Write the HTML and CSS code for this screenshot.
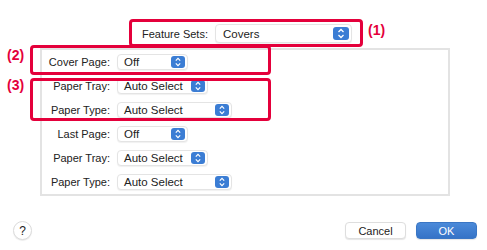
FILE: index.html
```html
<!DOCTYPE html>
<html lang="en">
    <head>
        <meta charset="UTF-8" />
        <title>Covers</title>
        <link rel="stylesheet" href="styles.css">
    </head>
    <body>
        <div class="sheet">
            <div class="feature-row">
                <span class="feature-label">Feature Sets:</span>
                <div class="popup popup-feature">
                    <span>Covers</span>
                    <svg class="stepper" width="16" height="13" viewBox="0 0 16 13">
                        <rect width="16" height="13" rx="3" fill="#3b7dd4"/>
                        <polyline points="5.5,5 8,2.5 10.5,5" fill="none" stroke="#fff" stroke-width="1.3"/>
                        <polyline points="5.5,8 8,10.5 10.5,8" fill="none" stroke="#fff" stroke-width="1.3"/>
                    </svg>
                </div>
            </div>

            <div class="panel">
                <div class="row">
                    <span class="label">Cover Page:</span>
                    <div class="popup w-off">
                        <span>Off</span>
                        <svg class="stepper" width="14" height="12" viewBox="0 0 14 12">
                            <rect width="14" height="12" rx="3" fill="#3b7dd4"/>
                            <polyline points="4.8,4.6 7,2.4 9.2,4.6" fill="none" stroke="#fff" stroke-width="1.2"/>
                            <polyline points="4.8,7.4 7,9.6 9.2,7.4" fill="none" stroke="#fff" stroke-width="1.2"/>
                        </svg>
                    </div>
                </div>
                <div class="row">
                    <span class="label">Paper Tray:</span>
                    <div class="popup w-tray">
                        <span>Auto Select</span>
                        <svg class="stepper" width="14" height="12" viewBox="0 0 14 12">
                            <rect width="14" height="12" rx="3" fill="#3b7dd4"/>
                            <polyline points="4.8,4.6 7,2.4 9.2,4.6" fill="none" stroke="#fff" stroke-width="1.2"/>
                            <polyline points="4.8,7.4 7,9.6 9.2,7.4" fill="none" stroke="#fff" stroke-width="1.2"/>
                        </svg>
                    </div>
                </div>
                <div class="row">
                    <span class="label">Paper Type:</span>
                    <div class="popup w-type">
                        <span>Auto Select</span>
                        <svg class="stepper" width="14" height="12" viewBox="0 0 14 12">
                            <rect width="14" height="12" rx="3" fill="#3b7dd4"/>
                            <polyline points="4.8,4.6 7,2.4 9.2,4.6" fill="none" stroke="#fff" stroke-width="1.2"/>
                            <polyline points="4.8,7.4 7,9.6 9.2,7.4" fill="none" stroke="#fff" stroke-width="1.2"/>
                        </svg>
                    </div>
                </div>
                <div class="row">
                    <span class="label">Last Page:</span>
                    <div class="popup w-off">
                        <span>Off</span>
                        <svg class="stepper" width="14" height="12" viewBox="0 0 14 12">
                            <rect width="14" height="12" rx="3" fill="#3b7dd4"/>
                            <polyline points="4.8,4.6 7,2.4 9.2,4.6" fill="none" stroke="#fff" stroke-width="1.2"/>
                            <polyline points="4.8,7.4 7,9.6 9.2,7.4" fill="none" stroke="#fff" stroke-width="1.2"/>
                        </svg>
                    </div>
                </div>
                <div class="row">
                    <span class="label">Paper Tray:</span>
                    <div class="popup w-tray">
                        <span>Auto Select</span>
                        <svg class="stepper" width="14" height="12" viewBox="0 0 14 12">
                            <rect width="14" height="12" rx="3" fill="#3b7dd4"/>
                            <polyline points="4.8,4.6 7,2.4 9.2,4.6" fill="none" stroke="#fff" stroke-width="1.2"/>
                            <polyline points="4.8,7.4 7,9.6 9.2,7.4" fill="none" stroke="#fff" stroke-width="1.2"/>
                        </svg>
                    </div>
                </div>
                <div class="row">
                    <span class="label">Paper Type:</span>
                    <div class="popup w-type">
                        <span>Auto Select</span>
                        <svg class="stepper" width="14" height="12" viewBox="0 0 14 12">
                            <rect width="14" height="12" rx="3" fill="#3b7dd4"/>
                            <polyline points="4.8,4.6 7,2.4 9.2,4.6" fill="none" stroke="#fff" stroke-width="1.2"/>
                            <polyline points="4.8,7.4 7,9.6 9.2,7.4" fill="none" stroke="#fff" stroke-width="1.2"/>
                        </svg>
                    </div>
                </div>
            </div>

            <div class="footer">
                <button class="help">?</button>
                <div class="actions">
                    <button class="btn">Cancel</button>
                    <button class="btn btn-ok">OK</button>
                </div>
            </div>

            <!-- annotation marks -->
            <div class="mark mark-1"></div>
            <div class="mark mark-2"></div>
            <div class="mark mark-3"></div>
            <span class="tag tag-1">(1)</span>
            <span class="tag tag-2">(2)</span>
            <span class="tag tag-3">(3)</span>
        </div>
    </body>
</html>
```

FILE: styles.css
```css
* {
    margin: 0;
    padding: 0;
    box-sizing: border-box;
}

body {
    background: #fff;
    font-family: 'Liberation Sans', Arial, sans-serif;
    font-size: 11px;
    color: #222;
}

.sheet {
    position: relative;
    width: 487px;
    height: 250px;
    padding-top: 24px;
}

.feature-row {
    display: flex;
    align-items: center;
    height: 19px;
    padding-left: 140px;
    gap: 7px;
}

.feature-label {
    width: 68px;
    text-align: right;
}

.popup {
    display: flex;
    align-items: center;
    justify-content: space-between;
    height: 16px;
    padding: 0 2px 0 6px;
    background: #fff;
    border: 1px solid #e4e4e4;
    border-radius: 4px;
    box-shadow: 0 1px 1px rgba(0,0,0,0.06);
    font-size: 11.5px;
}

.popup-feature {
    width: 137px;
    height: 19px;
    padding-left: 7px;
}

.w-off {
    width: 71px;
}

.w-tray {
    width: 91px;
}

.w-type {
    width: 115px;
}

.stepper {
    display: block;
}

.panel {
    margin: 5px 37px 0 40px;
    border: 2px solid #e3e3e3;
}

.row {
    display: grid;
    grid-template-columns: 68px auto;
    column-gap: 7px;
    align-items: center;
    justify-items: start;
    height: 24px;
}

.label {
    justify-self: end;
}

.footer {
    display: flex;
    justify-content: space-between;
    align-items: center;
    margin-top: 25px;
    padding: 0 10px 0 13px;
}

button {
    font-family: inherit;
    font-size: 11px;
    color: #222;
    cursor: pointer;
}

.help {
    width: 19px;
    height: 19px;
    border-radius: 50%;
    border: 1px solid #dcdcdc;
    background: #fff;
    box-shadow: 0 1px 1px rgba(0,0,0,0.08);
    font-size: 12px;
    line-height: 16px;
}

.actions {
    display: flex;
    gap: 10px;
}

.btn {
    width: 61px;
    height: 17px;
    border: 1px solid #dedede;
    border-radius: 4px;
    background: #fff;
    box-shadow: 0 1px 1px rgba(0,0,0,0.1);
}

.btn-ok {
    border-color: #3a76c4;
    background: linear-gradient(#4b8ad9, #3573c7);
    color: #fff;
}

.mark {
    position: absolute;
    border: 3px solid #e4003b;
    border-radius: 4px;
}

.mark-1 {
    left: 129px;
    top: 19px;
    width: 234px;
    height: 28px;
}

.mark-2 {
    left: 30px;
    top: 45px;
    width: 241px;
    height: 30px;
}

.mark-3 {
    left: 30px;
    top: 78px;
    width: 241px;
    height: 43px;
}

.tag {
    position: absolute;
    font-size: 14px;
    font-weight: bold;
    color: #e4003b;
}

.tag-1 {
    left: 368px;
    top: 22px;
}

.tag-2 {
    left: 7px;
    top: 47px;
}

.tag-3 {
    left: 7px;
    top: 77px;
}
```
